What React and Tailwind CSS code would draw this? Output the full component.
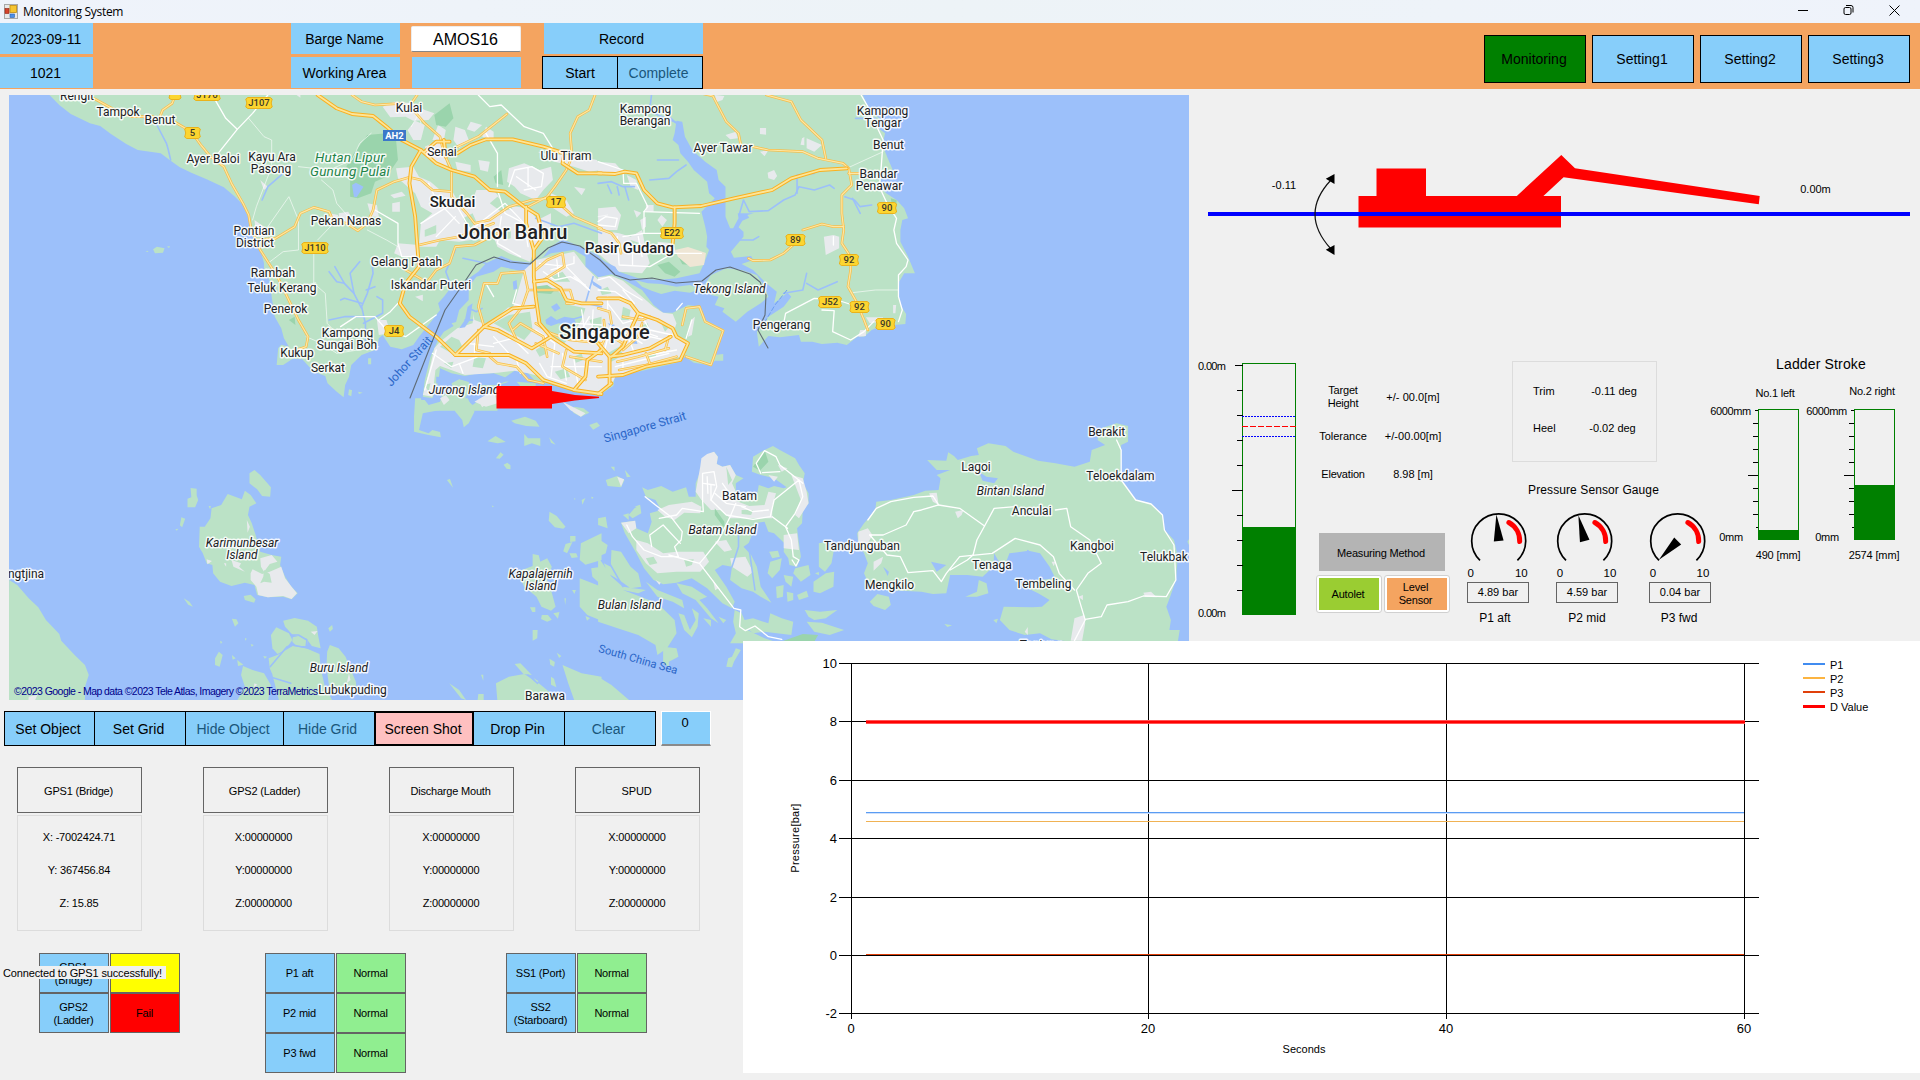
import React from "react";

/* ---------- Map data ----------
   The map is divided in four sheets; each sheet keeps its own survey grid. */

const SHEETS = {
  nw: "translate(0 90) scale(0.38265 0.33333)",
  ne: "translate(600 90) scale(0.38265 0.33333)",
  sw: "translate(0 400) scale(0.38265 0.33333)",
  se: "translate(600 400) scale(0.38265 0.33333)",
};

const LAND = {
  nw: [
    "M125 10 155 45 185 72 235 100 262 108 290 132 330 162 360 180 420 190 446 212 470 232 500 248 540 268 585 292 612 318 636 345 648 380 655 415 668 450 682 485 690 520 690 540 706 575 710 620 718 680 735 715 742 745 755 770 735 764 727 775 723 825 740 825 765 806 790 808 820 845 850 858 856 880 880 905 898 922 902 885 912 860 918 825 945 795 985 778 990 745 1000 735 1020 770 1050 778 1080 765 1095 740 1130 690 1150 660 1145 640 1160 620 1180 590 1200 585 1250 545 1270 520 1310 498 1340 512 1400 520 1420 500 1440 470 1470 448 1500 462 1572 500 1572 10Z",
    "M1145 750 1160 725 1190 705 1200 660 1225 630 1225 590 1245 560 1290 545 1310 530 1370 545 1390 520 1440 490 1500 480 1530 500 1530 530 1572 570 1572 912 1530 912 1500 905 1470 888 1440 882 1400 875 1380 850 1345 842 1320 862 1290 850 1240 852 1215 858 1180 850 1150 835 1145 880 1130 925 1105 920 1110 870 1125 800Z",
    "M1090 930 1110 930 1120 945 1150 935 1155 915 1185 905 1180 880 1200 868 1225 875 1230 900 1215 925 1235 945 1265 920 1290 900 1300 890 1300 962 1090 962Z",
    "M400 478 410 470 430 475 426 488 405 490ZM436 470l8-2-2 6zM380 485l6-3 2 4zM962 805l8 0 0 18-8 0zM912 898l8 3-2 18-8-4zM936 905l12 3-10 4z",
    "M1250 890 1280 870 1330 875 1290 890ZM1180 700 1195 695 1190 715ZM1350 875 1400 880 1400 890 1360 888Z",
  ],
  ne: [
    "M-5 10 685 10 700 50 712 70 730 85 722 110 745 130 738 165 752 205 765 240 735 262 732 290 748 310 775 330 795 355 805 385 790 390 785 420 785 455 805 500 823 550 795 550 782 575 780 620 788 650 800 672 798 702 770 705 740 705 710 720 690 740 675 738 645 765 620 758 580 762 555 755 525 755 520 735 470 742 440 738 415 770 410 725 440 680 480 650 500 620 490 608 455 640 462 605 430 575 400 540 370 522 400 510 395 498 350 503 342 485 375 440 375 425 362 412 372 392 390 383 385 375 402 370 360 370 362 385 348 415 340 415 328 380 328 290 310 270 305 240 275 215 250 190 240 178 222 140 215 95 200 92 195 130 190 150 205 165 210 190 230 215 245 240 280 275 285 310 300 325 265 365 275 410 280 440 278 470 285 480 272 520 260 550 200 565 150 570 100 565 50 545 15 520 -5 495Z",
    "M-5 562 30 553 60 568 110 600 140 645 165 668 190 668 230 645 262 650 275 690 325 720 300 795 322 792 322 812 300 812 288 826 245 818 222 800 200 818 120 840 60 855 38 862 35 888 -5 918Z",
    "M92 570 125 580 160 582 200 590 235 585 260 598 235 608 195 602 160 612 135 602 110 590Z",
    "M270 590 290 555 330 535 370 540 410 555 430 590 440 620 420 640 385 665 355 695 320 665 325 655 300 645 310 620 290 615 300 600Z",
  ],
  sw: [
    "M24 540 45 555 75 595 100 622 120 660 155 702 160 722 195 765 222 795 232 825 222 860 222 905 20 905Z",
    "M535 380 550 355 553 325 578 315 595 282 632 298 640 272 655 285 670 310 652 320 648 345 658 370 668 405 680 455 710 465 735 470 732 495 745 530 760 558 778 580 762 598 740 590 700 592 672 585 665 555 640 548 605 558 575 545 557 520 555 495 540 490 530 460 520 440 522 380Z",
    "M665 210 680 225 708 262 706 290 685 288 672 268 652 250 652 220Z",
    "M498 264l16 2 0 20 4 14-8 22-20 0 0-26 10-4z M474 352l10 4-8 26-6-6z M458 388l8-2-4 6z M545 318l6 0-2 10z",
    "M637 588 655 584 668 598 664 608 640 600ZM480 595 495 605 504 620 492 614ZM606 656 618 658 623 670 614 680ZM562 775 572 755 582 765 574 800 562 795ZM575 722l6 4-4 6z M606 765l10 10-8 4z M620 780l16 14-14 4z M640 714l5 2-4 6z M655 732l8 3-5 5z M688 768l10 2-6 6z",
    "M740 662 770 654 805 662 828 680 832 710 838 745 815 738 800 715 765 705 745 680Z",
    "M722 682 755 700 764 720 745 750 725 762 712 745 708 705Z",
    "M765 712 790 706 804 722 802 738 775 738 764 725Z",
    "M702 775 725 765 765 738 800 745 835 762 838 805 848 855 870 905 740 905 720 845 705 805Z",
    "M862 735 885 745 903 770 915 805 930 845 932 870 860 858 853 800 855 755Z M858 685l10-10 2 12-8 8z",
    "M635 798 660 810 690 820 708 855 700 905 618 905 640 860 630 825Z M712 825 732 840 755 855 800 905 730 905Z",
    "M1085 -5 1100 -5 1103 15 1155 15 1150 30 1105 40 1095 90 1120 100 1130 90 1150 96 1152 112 1120 105 1082 95 1082 50Z",
    "M1178 -5 1222 -5 1240 35 1225 70 1212 82 1208 60 1190 35Z",
    "M1336 62 1372 50 1400 62 1410 80 1375 78 1345 70ZM1274 124 1295 108 1322 126 1300 130ZM1370 102 1380 115 1412 115 1412 138 1390 130 1370 138ZM1435 112 1452 134 1440 128ZM1296 175 1308 157 1316 164 1306 176ZM1316 194l10-6 8 8 0 12-10-2z M1168 240l8-3 8 26-6-8z M1285 316l6 4-4 2z",
    "M1500 20 1525 25 1540 38 1518 50 1498 38ZM1540 75l20 -8 8 10-18 12zM1500 294l4 2-2 4z M1520 300l10-6-8 20z M1545 290l6 2-4 6z",
    "M1436 335 1455 348 1478 380 1472 386 1450 382 1434 362ZM1490 408l14 0 0 16-14 2z M1478 432l18-6-14 34-10-6z M1488 460l18 0 4 12-16 2z",
    "M1392 462 1408 466 1412 485 1430 475 1442 500 1430 540 1440 570 1452 620 1440 632 1415 620 1402 590 1370 560 1352 515 1392 498Z",
    "M1518 430 1572 400 1572 480 1530 494 1515 480ZM1545 505 1572 500 1572 555 1548 530ZM1515 535 1572 560 1572 662 1535 645 1515 620ZM1385 622l14 0 0 14-8 0z M1416 645l16 0 10 14-12 6-16-8z M1446 640l16-4-4 20z M1475 595l4 0-2 20z M1495 570l10 0-4 12z M1530 648l12 6-8 8z",
    "M1392 690 1405 690 1404 715 1392 722ZM1345 792 1360 790 1390 825 1368 822ZM1300 905 1296 850 1330 830 1370 822 1408 850 1440 880 1452 905ZM1395 835l12 8-4 6z M1470 795 1520 820 1572 830 1572 905 1502 905 1485 850ZM1436 776l14 10-2 14-10-6z M1440 830l8 6 6 26-14-8z M1174 850 1200 870 1218 900 1205 895ZM1250 882l14 0 0 20-16 0z M1257 824l6 0 0 18z M1455 758l12 10-6 6z",
  ],
  se: [
    "M110 262 125 270 160 258 190 275 225 262 232 290 250 290 250 250 262 215 268 180 280 165 298 155 308 170 305 192 320 200 340 195 355 225 375 235 355 250 355 275 330 290 362 300 410 285 415 255 440 265 455 258 480 265 488 262 455 235 420 225 397 215 400 170 430 150 452 138 470 150 510 175 520 195 535 220 530 250 545 280 545 310 530 330 528 370 515 385 520 430 525 470 515 500 495 495 492 475 480 455 482 430 455 400 440 395 430 365 405 370 400 420 375 440 395 465 410 500 420 560 448 608 420 590 400 575 370 565 340 540 345 500 320 495 300 510 330 560 352 605 345 625 320 610 280 565 240 535 200 548 165 553 140 540 115 505 95 460 80 430 65 400 55 368 90 362 95 385 125 400 135 365 130 340 160 330 145 300 120 290Z",
    "M442 455 465 452 470 470 450 475ZM445 485 475 475 470 510 450 535 438 520ZM510 505 545 495 550 525 525 545 505 520ZM480 525 505 530 500 560 485 545ZM460 560 480 555 478 590 462 595ZM488 575 505 580 505 600 490 605ZM515 585 540 572 545 590 520 600Z",
    "M572 430 590 425 612 445 605 490 588 515 572 500ZM558 545 590 520 612 515 610 560 575 580 558 575Z M562 520l10 -4 0 10z",
    "M535 630 575 635 620 630 590 655 560 660 545 650ZM540 665 580 668 638 690 600 705 560 695ZM445 640 475 655 505 665 500 705 430 695 400 700 380 680 400 655 440 670Z",
    "M352 630 370 640 378 660 400 655 385 690 430 715 470 730 340 730 355 700 348 665Z",
    "M0 420 20 435 15 460 -5 470ZM30 450 55 455 80 500 100 520 108 560 80 565 50 540 20 520 10 490 28 500ZM-5 470 30 530 60 560 120 570 100 580 60 570 150 610 195 660 200 700 175 745 150 765 145 735 100 705 60 690 -5 665Z",
    "M120 545 150 570 215 600 220 625 190 605 150 590ZM205 640 220 645 235 690 250 660 240 625 258 640 255 680 240 712 220 690ZM165 740 200 745 205 770 180 785 180 800 165 790ZM200 550 240 560 280 590 260 600 280 625 310 670 290 655 250 600 215 580Z",
    "M-5 545 15 550 45 575 10 570ZM355 745 368 750 350 785 345 802 330 800 335 775 345 770ZM270 655l20 5 0 20zM310 650l20 10-8 10z",
    "M-5 830 30 855 78 902 -5 902ZM15 240 45 228 64 240 55 262 20 258ZM65 210 80 230 70 232ZM28 200l10 0 0 14zM75 345 90 325 105 315 108 340 85 355ZM-5 355 15 350 20 385 -5 375ZM60 345l15-5 0 20zM90 320l14-6 2 8z",
    "M722 305 760 300 820 285 850 272 885 270 890 235 880 225 915 210 880 210 855 180 905 182 910 157 925 168 935 180 970 168 990 165 985 145 1015 130 1060 138 1080 155 1145 182 1190 190 1240 200 1280 185 1285 150 1320 135 1300 120 1310 85 1350 70 1380 78 1380 125 1362 135 1360 210 1365 245 1400 300 1440 310 1470 345 1475 390 1500 420 1510 470 1505 540 1490 590 1480 620 1492 660 1488 690 1515 690 1510 725 1230 725 1180 718 1150 700 1110 705 1070 690 1045 660 1055 620 1130 622 1155 620 1175 600 1145 580 1110 560 1110 545 1150 540 1190 535 1175 500 1150 460 1120 452 1070 460 1060 490 1050 500 1030 460 1028 500 1000 530 960 525 915 525 905 580 870 582 840 575 790 572 750 570 705 560 690 520 700 490 690 460 675 430 672 400 690 370 705 350 720 325Z",
    "M955 590 985 575 990 540 1010 550 1015 580 985 590ZM705 605 725 582 755 590 760 615 745 630 715 618ZM900 672l20 4-12 5zM1028 660l12-4-4 14zM1535 425l4-8 0 18z",
  ],
};

const URBAN = {
  nw: [
    "M1000 50 1030 35 1080 40 1110 60 1135 70 1120 90 1080 92 1060 80 1020 82ZM1065 120 1085 92 1110 105 1100 150 1080 150ZM1145 105 1165 120 1160 150 1130 150ZM1190 110 1215 120 1225 150 1200 175 1185 150ZM1110 170 1150 150 1170 230 1150 225 1125 210ZM1190 215 1230 225 1230 245 1195 240Z",
    "M1035 235 1080 230 1095 260 1125 275 1150 300 1180 300 1195 330 1235 330 1245 300 1290 300 1320 345 1380 355 1405 390 1440 370 1440 400 1430 440 1400 470 1385 515 1330 490 1300 470 1290 440 1200 455 1150 450 1140 470 1095 470 1100 400 1130 370 1100 350 1085 310 1040 265Z",
    "M1330 235 1370 220 1410 240 1440 230 1445 270 1420 300 1400 330 1360 310 1345 290 1325 275ZM1250 210 1280 215 1275 245 1255 240ZM1270 110 1290 125 1290 150 1260 140ZM1230 95 1260 105 1240 125 1220 118ZM1405 185 1450 195 1490 195 1560 210 1572 240 1540 245 1500 230 1450 215Z",
    "M1440 310 1480 330 1500 370 1480 380 1440 350ZM1500 290l30 6-10 20zM1025 340l20-5 0 30-20 0zM1020 315l30-10 10 12-30 8zM885 370 910 365 925 395 890 405ZM960 340 985 345 990 380 970 380ZM665 390 690 410 700 440 670 440ZM680 270 700 290 690 300ZM1040 460 1095 465 1090 500 1050 500 1030 490ZM1085 620l20-6 0 20zM985 690 1010 690 1020 730 990 735ZM860 370l24 5-6 20z M775 15l10 0 0 8z",
    "M1150 755 1195 715 1235 700 1240 650 1270 635 1340 655 1370 540 1400 510 1500 485 1530 530 1572 580 1572 905 1500 900 1440 880 1420 862 1380 850 1345 842 1300 848 1215 855 1150 828 1138 840 1130 920 1105 915 1120 850 1135 775Z",
    "M1240 935 1290 900 1300 940 1270 950ZM1150 925 1165 915 1175 930 1160 945Z",
  ],
  ne: [
    "M-5 215 40 220 60 245 20 255 -5 245ZM70 255 95 270 100 300 80 290ZM-5 355 40 350 55 375 45 420 -5 420ZM-5 420 50 430 80 440 110 420 120 480 130 520 110 550 50 545 -5 490ZM88 360l20 8-12 15zM120 345l20 0 0 20-20 0zM150 390l10-15 15 15-12 20zM150 455 190 460 200 490 160 490ZM105 390l15-10 0 30-10 10zM160 435l25 0 -5 12z",
    "M300 15 325 18 320 30 305 36ZM328 135 355 125 360 145 340 148ZM418 114l16 0 0 20-16-2zM540 145 580 165 560 185 540 175ZM528 145l6 -4 0 25-10-2zM438 248 455 240 463 258 455 270 440 265ZM418 185l22-4-10 18zM585 440 610 435 625 440 625 475 590 495ZM695 682 740 682 735 695 705 700ZM680 720 695 720 695 738 675 740ZM766 645l8 0-2 25-6 0z",
    "M-5 562 30 558 60 572 110 620 140 650 165 668 190 672 200 700 190 735 230 760 222 795 120 835 60 850 40 860 30 885 -5 900ZM238 690 248 680 240 735 230 740Z",
  ],
  sw: [
    "M655 520 660 508 685 522 705 515 735 500 745 535 762 560 776 580 762 597 740 588 700 592 675 585 670 560 655 540ZM680 475 710 465 725 485 705 492 690 515 682 500ZM605 480 630 490 625 500 640 515 610 500ZM540 478l14 5-12 10zM585 490l6 0 0 10z M645 360l8 20-6 18zM812 695l18-2-8 12zM75 890 98 884 90 905 74 905ZM1250 0 1285 0 1260 22ZM1470 5 1530 40 1518 50 1490 30ZM906 850l6-30 4 20z M665 850l8 4-10 8z",
  ],
  se: [
    "M262 200 265 175 280 162 298 155 308 170 305 192 320 200 340 195 355 225 345 250 355 275 350 300 390 318 430 315 440 275 460 280 450 320 450 355 340 355 315 330 290 330 265 300 250 275Z",
    "M150 330 180 315 240 305 265 320 262 340 220 338 195 360 170 350ZM95 420 125 430 165 460 200 455 270 455 285 485 262 515 200 515 150 520 120 490 95 450ZM55 368 92 362 95 385 75 400ZM500 225 530 235 540 275 545 310 520 355 510 345 525 300ZM480 405 515 400 520 450 480 445ZM340 475 380 470 400 515 385 530 345 500ZM300 425l30 -5 15 30-20 5zM440 225l25 5-10 15zM45 230l18 8-8 22zM465 195l25 10-15 10zM145 540l14 8-4 6zM295 540l14 25-8 6z",
    "M675 395 700 385 712 405 700 430 675 425ZM860 280 880 278 885 315 870 305ZM928 335 950 330 945 345 935 355ZM715 485 740 470 735 490 715 512ZM1420 578 1440 575 1455 592 1425 590ZM1240 655 1265 645 1268 670 1260 722 1230 722ZM1250 590l12-5 0 16zM1110 695l8-14 0 24zM1180 485l10 0-4 14z",
  ],
};

/* Green pockets that lie inside built-up areas. */
const GREENS = {
  nw: [
    "M1225 640 1230 590 1250 562 1300 545 1335 560 1340 600 1330 650 1290 690 1275 705 1240 690 1235 660Z",
    "M1402 600 1450 595 1475 620 1490 645 1530 655 1520 690 1495 735 1470 765 1440 735 1412 715Z",
    "M1290 700 1330 675 1385 665 1392 720 1370 750 1330 725Z",
    "M1150 770 1180 740 1200 750 1210 775 1180 790ZM1240 800 1270 805 1262 835 1235 830ZM1160 820 1185 815 1180 835ZM1440 560 1470 545 1490 575 1450 575ZM1400 780 1420 765 1430 790 1410 800ZM1450 845 1480 835 1490 860 1465 868ZM1540 690 1572 680 1572 715 1550 715ZM1110 885 1125 880 1120 905ZM1500 800l20-10 5 20-20 8z",
    "M1210 385 1235 370 1245 395 1225 420ZM1300 320 1340 355 1310 365 1280 340ZM1110 420 1140 405 1140 430 1110 440ZM1310 425 1335 415 1335 445 1315 450ZM1140 320 1165 330 1150 350Z",
  ],
  ne: ["M60 650 80 660 75 690 55 690ZM100 710 125 700 130 725 110 735ZM20 790 50 770 60 795 30 815ZM130 790 150 785 145 800 125 805ZM0 600 20 590 30 610 5 615ZM160 700 185 705 170 725ZM80 450l25 10-15 20zM20 470l18 5-10 18z"],
  sw: ["M690 510 705 522 710 548 690 545 680 550 688 530Z"],
  se: ["M120 475 140 470 150 490 130 495ZM220 480 245 478 240 495 225 500ZM330 200 345 240 335 255ZM370 330 400 330 395 345 370 342Z"],
};

const PARK = {
  nw: [
    "M960 135 1010 130 1035 150 1040 210 1010 260 980 275 970 310 935 325 915 320 915 270 905 230 925 190Z",
    "M1135 75 1175 40 1185 85 1165 110 1140 105Z",
    "M1290 260 1310 240 1315 285 1295 280ZM1395 590 1430 585 1450 600 1440 612 1400 608ZM755 690 770 680 772 705Z",
  ],
  ne: ["M150 525 180 515 210 545 195 560 170 550ZM205 500l25 5 5 20-20-2zM760 325l15 5 0 20-12-4z"],
  sw: [],
  se: ["M400 200 430 150 440 185 418 212ZM480 722 530 702 570 705 560 725 480 725ZM300 325 325 365 325 385 300 345Z"],
};

const WATER = {
  nw: [
    "M920 285 930 278 950 290 932 322 925 320Z",
    "M1425 690 1440 678 1455 690 1475 680 1500 685 1505 698 1480 705 1460 700 1440 708 1428 702ZM1440 650 1455 640 1465 655 1450 665ZM1340 575 1350 570 1352 595 1342 600ZM1200 715 1215 690 1222 650 1235 640 1228 690 1215 712ZM1545 570 1572 590 1572 600 1550 585Z",
    "M1140 860 1200 862 1240 875 1290 862 1330 870 1300 885 1250 885 1200 866 1160 885 1140 880Z",
  ],
  ne: ["M-5 505 40 530 55 560 20 540 -5 530Z", "M20 700 40 705 30 712ZM80 760 95 752 98 762Z"],
  sw: ["M895 870l8 0 0 8z"],
  se: ["M990 215 1010 230 1040 235 1030 250 1000 242ZM865 485 905 495 880 515ZM740 500 755 515 752 528ZM400 395 430 385 425 420 410 460 385 440Z"],
};

const RIVERS = {
  nw: [
    "M955 770 955 700 945 650 960 610 975 550 972 520", "M945 655 925 610 900 580 880 575 860 545", "M945 640 900 625 890 630", "M925 610 915 550 940 515", "M900 580 875 530", "M957 600 980 590", "M950 680 900 680 860 690", "M950 700 1000 670 1000 630 985 620", "M1180 590 1165 545 1190 480", "M446 210 440 180 435 160 410 105 370 80", "M1270 520 1210 505", "M1400 385 1460 410 1500 400 1572 430", "M1550 560 1530 640 1572 650", "M1430 700 1490 690 1520 680", "M685 330 700 290 740 250", "M1225 655 1245 665 1260 655", "M1215 690 1235 690", "M1395 440 1415 400",
  ],
  ne: [
    "M135 10 132 40 125 60 170 85 205 100", "M365 370 375 330 390 365 440 362 480 330 510 315 520 290 560 300 600 285 612 295", "M515 310 515 255 560 250", "M640 320 665 330 680 350 710 345", "M660 325 680 370", "M225 225 200 245 180 265 130 270", "M205 210 150 210", "M-5 280 30 275 60 290 90 290", "M20 285 30 310", "M45 290 50 315", "M65 290 75 330", "M365 450 400 450 415 440", "M480 610 530 600 540 550", "M540 580 570 600 620 575", "M200 100 180 80", "M668 85 720 85",
  ],
  sw: ["M706 800 750 740 765 735 830 750", "M760 705 780 705 802 720 800 740", "M705 830 760 850", "M1405 850 1380 825"],
  se: ["M362 372 362 440 345 500", "M405 570 390 450", "M190 60 130 70", "M130 545 90 500 70 440", "M15 470 60 560", "M1118 452 1128 470"],
};

const WHITE_ROADS = {
  nw: [
    "M700 15 660 70 620 118 570 190", "M560 25 590 85 620 118", "M1250 15 1280 50 1310 45 1370 110 1420 130 1450 185", "M1270 130 1300 190 1300 290", "M890 710 930 680 980 680 1010 720 1060 740 1140 675", "M990 690 1020 665 1040 640", "M980 360 1040 400 1040 460 1050 500 1090 500", "M1300 300 1320 370 1370 400", "M1190 340 1230 420 1320 340 1370 400 1380 470", "M1330 290 1345 240 1390 230 1420 250 1415 290 1370 300", "M1350 260 1400 300", "M1380 235 1380 290", "M1120 280 1140 330 1200 400", "M1100 400 1170 350", "M1140 440 1190 380", "M1350 600 1340 640 1370 650", "M1540 680 1520 720 1572 740", "M1500 560 1540 600", "M1130 790 1180 830 1250 800 1330 800", "M1240 760 1240 800", "M1400 720 1450 760 1440 860", "M1290 740 1330 790", "M1470 790 1480 870", "M1440 830 1572 830", "M1140 780 1110 900", "M1410 520 1480 530 1540 600", "M1440 540 1500 520 1500 500", "M1270 580 1290 620", "M1310 380 1300 460 1360 500",
    "M1420 545 1450 570 1490 560 1530 585", "M1455 510 1460 560", "M1520 660 1530 740", "M1550 660 1545 760", "M1505 700 1572 705", "M1500 810 1510 880", "M1410 820 1430 860 1480 880", "M1290 760 1340 745 1380 790", "M1200 820 1210 850", "M1220 760 1290 770", "M1350 810 1360 850",
  ],
  ne: [
    "M680 10 700 50 715 90 740 150 735 230 730 290 750 340 775 385 768 420 775 460 805 510 800 530 780 555 780 620 790 660 780 695", "M480 700 485 670 560 625 620 630 660 645", "M580 660 612 662 608 725 655 750 690 725 715 695", "M62 280 95 280 125 350 115 365 260 370", "M115 365 115 430 60 440", "M-5 215 60 240 62 280", "M-5 395 15 380 45 385 40 410 -5 405", "M45 440 50 525 130 530 190 490 265 490", "M85 470 85 525", "M100 440 110 500", "M110 430 160 430", "M-5 570 25 560 65 600 110 630", "M60 600 90 640", "M20 640 60 700 90 690", "M110 680 130 720 190 735", "M40 830 110 810 180 790", "M60 840 60 810 200 780", "M240 690 225 745", "M200 660 215 640", "M610 440 610 465", "M100 720 150 740", "M30 700 10 790",
    "M-5 600 40 605 70 630", "M20 660 20 620", "M70 730 90 790", "M-5 720 60 725 110 760", "M130 740 170 750",
  ],
  sw: [],
  se: [
    "M118 290 145 315 185 350 215 395 212 420 195 440 205 470 160 470 115 450 85 410 70 375", "M155 355 200 345 215 325 270 335 268 300 268 220 298 215 305 260 290 300 330 345 400 358 445 350 455 300 520 240 530 290 510 340 485 380 500 420 505 470 520 480 512 498 502 480", "M135 440 130 405 165 375 210 430", "M355 310 340 350 310 420 275 470 260 490 180 465", "M260 490 350 625 368 630 365 680 380 692 405 678 440 710 475 718", "M300 280 330 310 380 320", "M270 250 300 255", "M280 230 282 280", "M290 255 290 300", "M420 220 408 190 430 152 460 170 470 195 530 250", "M425 218 470 215", "M450 350 490 385", "M350 300 320 250", "M370 320 400 335 440 330",
    "M700 360 722 325 760 305 820 292 870 288 885 315 840 330 820 335 800 375 740 405 705 405", "M885 315 940 325 1005 378 985 420 975 465", "M1005 378 1030 325 1085 320", "M1190 330 1220 325 1230 380 1280 420 1310 490 1275 520 1245 570 1255 610 1268 660 1240 722", "M705 405 750 465 785 470 805 518 870 512 892 545 905 520 940 470 1025 460 1085 415 1150 435 1185 470 1200 520 1240 570", "M915 510 960 480 975 465", "M1350 120 1362 150 1362 240 1400 300 1440 312 1470 345 1475 390 1500 435 1505 540 1480 590 1420 588 1380 605 1325 615 1310 650 1268 658",
  ],
};

/* Narrow country lanes. */
const LANES = {
  nw: ["M650 85 690 140 710 150 710 230 690 290 670 350 660 390", "M700 410 755 320 780 390 780 480 740 485 700 520", "M820 490 820 580 850 610 855 700 880 730", "M750 590 800 585 825 578", "M800 740 840 760 880 790 990 770", "M970 130 940 160 920 210 860 240 780 230", "M840 270 870 300 880 340 910 380", "M880 390 830 450", "M960 420 1010 450 1040 470", "M1075 110 1095 70 1100 100"],
  ne: ["M645 235 740 185", "M660 608 720 600 780 600", "M-5 380 20 375"],
  sw: [],
  se: [],
};

const YELLOW_ROADS = {
  nw: [
    "M245 25 300 60 345 80 400 80", "M458 15 450 40 425 60 418 80", "M455 95 500 125 525 165 550 200 585 230 605 280 635 340 650 375 655 410 680 480 725 560 780 690 805 740 800 770 775 780", "M670 450 720 445 770 410 785 370 820 352 860 365 870 390 905 400 935 422 960 400 975 360 985 300 1030 275 1070 262 1100 270 1130 300 1180 305", "M920 15 945 35 980 45 1050 40 1080 60 1110 100 1150 140 1160 190 1180 240 1180 320 1220 370 1240 400", "M1090 15 1075 40", "M1195 170 1250 140 1325 72", "M1555 15 1540 60 1510 80 1490 130 1495 200 1480 240 1450 290 1430 320 1380 350", "M1430 325 1390 330 1330 350 1280 390 1240 400", "M1460 340 1500 380 1572 415", "M1095 465 1150 450 1200 440 1290 400", "M1120 570 1140 540 1175 520 1190 470 1240 465 1300 430", "M1060 540 1120 580", "M1265 710 1250 650 1265 580 1300 580 1310 550 1370 545 1380 600 1365 650 1330 700 1350 750", "M1380 600 1430 600 1490 600 1500 640 1480 640", "M1400 540 1430 510 1470 490 1475 530 1420 570", "M1250 720 1245 780 1280 790", "M1280 800 1300 820 1350 830 1380 870 1420 880", "M1400 700 1440 730 1490 750 1572 760", "M1340 720 1360 700 1420 740 1430 800", "M1480 780 1470 830 1530 870", "M1490 800 1572 815", "M1400 760 1460 790",
  ],
  ne: [
    "M265 10 295 18 330 95 362 130 368 165", "M435 15 500 35 525 90 580 150 590 205", "M400 170 440 180 530 185 570 205 635 220 650 235 658 285 632 315 632 370 637 420 632 460 655 500 655 540 648 590 670 635 690 690 700 720", "M650 250 680 250", "M530 420 580 402 610 410 637 410", "M388 505 400 512 445 510 480 490 510 460", "M-5 415 30 430 50 460 55 490", "M-5 655 25 665 30 700", "M60 680 110 690", "M110 690 130 680", "M215 705 225 655 260 650 275 695 322 722 290 825 225 800", "M45 815 100 800 180 775", "M50 840 120 825 200 800", "M180 740 170 780", "M30 740 60 760 40 800", "M10 690 15 740 -5 790", "M110 700 100 740 60 780", "M120 790 130 820",
  ],
  sw: [],
  se: [],
};

const HIGHWAYS = {
  nw: [
    "M830 15 880 55 920 72 975 78 1010 110 1050 150 1100 180 1140 220 1180 240 1240 260 1280 300 1320 305 1370 350 1405 375 1420 440 1395 480 1395 560 1400 620 1410 700 1440 740 1500 785 1572 790",
    "M1100 180 1075 230 1070 280 1085 380 1090 460 1095 530 1060 580 1045 640 1070 680 1140 740 1190 795 1330 795 1375 820 1420 870 1500 900 1572 912",
    "M1110 185 1140 155 1175 155", "M1160 150 1165 200", "M1195 190 1230 165 1270 148 1340 148 1420 170 1475 190 1470 220 1510 250 1572 250",
    "M1395 575 1430 570 1465 595 1480 630 1520 640 1572 640", "M1190 795 1265 710 1300 720 1390 775 1440 740", "M1265 710 1340 655 1395 650", "M1375 350 1375 400 1395 480", "M1500 900 1530 860 1535 810 1572 780",
  ],
  ne: [
    "M-5 250 40 252 65 245 95 250 115 300 150 340 190 352 265 348 350 325 450 300 500 265 575 240 645 235", "M195 352 195 400 190 460",
    "M-5 625 50 625 80 640 100 670 150 690 190 715 200 740 230 760 210 810 120 830 60 855 -5 860", "M25 885 25 800 60 795 130 775 185 740", "M-5 760 25 800", "M100 670 80 720 60 770 30 800", "M-5 912 30 880",
  ],
  sw: [],
  se: [],
};

const TOWNS = [
  ["Rengit", 77, 96], ["Tampok", 118, 112], ["Benut", 160, 120], ["Ayer Baloi", 213, 159],
  ["Kayu Ara", 272, 157], ["Pasong", 271, 169], ["Kulai", 409, 108], ["Senai", 442, 152],
  ["Ulu Tiram", 566, 156], ["Pekan Nanas", 346, 221], ["Pontian", 254, 231], ["District", 255, 243],
  ["Gelang Patah", 406.5, 262], ["Rambah", 273, 273], ["Iskandar Puteri", 431, 285],
  ["Teluk Kerang", 282, 288], ["Penerok", 285.5, 309], ["Kampong", 347.5, 333], ["Sungai Boh", 347, 345],
  ["Kukup", 297, 353], ["Serkat", 328, 368], ["Kampong", 645.5, 109], ["Berangan", 645, 121],
  ["Ayer Tawar", 723, 148], ["Kampong", 882.5, 111], ["Tengar", 883, 123], ["Benut", 888.5, 145],
  ["Bandar", 878.6, 174], ["Penawar", 879, 186], ["Pengerang", 781.5, 325], ["ngtjina", 26, 574],
  ["Lubukpuding", 352.5, 690], ["Barawa", 545, 696], ["Batam", 739.5, 496], ["Lagoi", 976, 467],
  ["Anculai", 1031.7, 511], ["Berakit", 1106.7, 432], ["Teloekdalam", 1120.5, 476],
  ["Kangboi", 1092, 546], ["Telukbak", 1164, 557], ["Tandjunguban", 862, 546], ["Tenaga", 992, 565],
  ["Mengkilo", 889.5, 585], ["Tembeling", 1043.5, 584], ["Tanjung", 1041, 645],
];

const ISLANDS = [
  ["Jurong Island", 464, 390], ["Tekong Island", 729.5, 289], ["Karimunbesar", 242, 543], ["Island", 242, 555],
  ["Kapalajernih", 540.5, 574], ["Island", 541, 586], ["Buru Island", 339, 668], ["Batam Island", 722.5, 530],
  ["Bulan Island", 629.5, 605], ["Bintan Island", 1010.5, 491],
];

const SHIELDS = [
  ["J107", 259, 103], ["J176", 207, 95], ["", 175, 94], ["5", 192.5, 133], ["17", 556, 202], ["J110", 315, 248],
  ["J4", 394, 331], ["E22", 672, 233], ["89", 795.5, 240], ["92", 849, 260], ["92", 859.5, 307],
  ["90", 887, 208], ["90", 885.5, 324], ["J52", 830, 302],
];

function Paths({ data, ...rest }) {
  return Object.keys(SHEETS).map((k) => (
    <g key={k} transform={SHEETS[k]} {...rest}>
      {data[k].map((d, i) => (
        <path key={i} d={d} vectorEffect="non-scaling-stroke" />
      ))}
    </g>
  ));
}

const line = { fill: "none", strokeLinecap: "round", strokeLinejoin: "round" };
const halo = { stroke: "#ffffff", strokeWidth: 3, strokeOpacity: 0.85, strokeLinejoin: "round", paintOrder: "stroke" };

function MapView() {
  return (
    <svg className="block h-[605px] w-[1180px]" viewBox="9 95 1180 605" fontFamily="Roboto, sans-serif" textAnchor="middle">
      <rect x="9" y="95" width="1180" height="605" fill="#9cc0fa" />
      <Paths data={LAND} fill="#bbe2c6" />
      <Paths data={URBAN} fill="#e8eaed" />
      <Paths data={GREENS} fill="#bbe2c6" />
      <Paths data={PARK} fill="#9ad4ac" />
      <path d="M675 250 688 247 706 253 704 265 690 267 678 257Z" fill="#efe6d5" />
      <Paths data={WATER} fill="#9cc0fa" />
      <Paths data={RIVERS} stroke="#9cc0fa" strokeWidth="1.6" {...line} />
      <Paths data={LANES} stroke="#ffffff" strokeOpacity="0.6" strokeWidth="1" {...line} />
      <Paths data={WHITE_ROADS} stroke="#ffffff" strokeWidth="1.3" {...line} />
      <Paths data={YELLOW_ROADS} stroke="#f7bd48" strokeWidth="2.6" {...line} />
      <Paths data={YELLOW_ROADS} stroke="#fde7a5" strokeWidth="1.2" {...line} />
      <Paths data={HIGHWAYS} stroke="#f9b021" strokeWidth="3.8" {...line} />
      <Paths data={HIGHWAYS} stroke="#fde597" strokeWidth="1.8" {...line} />
      <path
        d="M410 398 432 342 445 310 459 290 476 265 494 257 510 262 530 264 548 248 562 242 580 246 600 260 615 275 630 280 652 278 676 283 702 281 716 270 730 267 750 274 760 282 766 295 765 315 758 330 768 348"
        stroke="#5f6b76" strokeWidth="1.1" {...line}
      />
      <path d="M787 290 775 305 760 330" stroke="#6d9ff2" strokeWidth="1" strokeDasharray="5 2" fill="none" />

      {SHIELDS.map(([t, x, y], i) => {
        const w = 12 + t.length * 3.6;
        return (
          <g key={i}>
            <path
              d={`M${x - w / 2} ${y - 4}L${x - w / 2 + 2} ${y - 5.5}H${x + w / 2 - 2}L${x + w / 2} ${y - 4}L${x + w / 2 - 1} ${y}L${x + w / 2} ${y + 4}L${x + w / 2 - 2} ${y + 5.5}H${x - w / 2 + 2}L${x - w / 2} ${y + 4}L${x - w / 2 + 1} ${y}Z`}
              fill="#fcd530" stroke="#e9b21c" strokeWidth="1"
            />
            <text x={x} y={y + 3.4} fontSize="9.5" fontWeight="500" fill="#3c3a2a">{t}</text>
          </g>
        );
      })}
      <rect x="383" y="130" width="23" height="11" fill="#3b78c9" />
      <text x="394.500" y="139.200" fontSize="9.5" fontWeight="700" fill="#ffffff">AH2</text>

      <g fontSize="12" fill="#202124" {...halo}>
        {TOWNS.map(([t, x, y], i) => <text key={i} x={x} y={y + 4.3}>{t}</text>)}
      </g>
      <g fontSize="12" fontStyle="italic" fill="#202124" {...halo}>
        {ISLANDS.map(([t, x, y], i) => <text key={i} x={x} y={y + 4.3}>{t}</text>)}
      </g>
      <g fontSize="13.5" fontStyle="italic" fill="#1e8449" {...halo} letterSpacing="0.200">
        <text x="350" y="161.500">Hutan Lipur</text>
        <text x="350" y="175.500">Gunung Pulai</text>
      </g>
      <g fontWeight="500" fill="#202124" {...halo}>
        <text x="452.500" y="207" fontSize="15">Skudai</text>
        <text x="629.500" y="253" fontSize="14.800">Pasir Gudang</text>
        <text x="512.500" y="239" fontSize="20">Johor Bahru</text>
        <text x="604.500" y="339" fontSize="20">Singapore</text>
      </g>
      <g fontSize="12" fill="#2a66c8">
        <text transform="translate(412 364) rotate(-48)">Johor Strait</text>
        <text transform="translate(646 431) rotate(-16)">Singapore Strait</text>
        <text transform="translate(637 663) rotate(16)" fontSize="11.200">South China Sea</text>
      </g>
      <path d="M496.500 386H552V391L575 395 599 396.800V398L575 400.500 552 404V408.500H496.500Z" fill="#ff0000" />
      <text x="14" y="694.500" textAnchor="start" textLength="304" fontFamily="'Liberation Sans', Arial, sans-serif" fontSize="10.500" fill="#00008b">
        ©2023 Google - Map data ©2023 Tele Atlas, Imagery ©2023 TerraMetrics
      </text>
    </svg>
  );
}

/* ---------- Title bar and toolbar ---------- */

function TitleBar() {
  return (
    <div className="flex h-[23px] items-center bg-gradient-to-r from-[#eff3fb] via-[#edf3f7] to-[#eff3fb] pl-1">
      <svg className="h-[15px] w-[14px]" viewBox="0 0 14 15">
        <rect x=".5" y=".5" width="13" height="14" fill="#e8e8e8" stroke="#a8a8a8" />
        <rect x="6" y="1.500" width="6.500" height="7" fill="#f6c531" stroke="#c08c10" strokeWidth=".8" />
        <rect x="1" y="4.500" width="4" height="5" fill="#d5432c" stroke="#8f2314" strokeWidth=".6" />
        <rect x="6" y="10" width="4.500" height="3.500" fill="#4e8fe8" stroke="#2b62ae" strokeWidth=".6" />
      </svg>
      <span className="ml-[5px] pt-px text-[12px] tracking-[-0.3px]" style={{ fontFamily: "'Open Sans', 'Noto Sans', sans-serif" }}>
        Monitoring System
      </span>
      <svg className="ml-auto mr-[19px] h-[23px] w-[103px]" viewBox="0 0 103 23" fill="none" stroke="#000000">
        <path d="M0 10.500h10" />
        <rect x="46" y="7.500" width="7" height="7" rx="1.500" />
        <path d="M48 5.500h5a2 2 0 0 1 2 2v5" />
        <path d="M91.500 5.500l10 10M101.500 5.500l-10 10" />
      </svg>
    </div>
  );
}

const box = "flex items-center justify-center bg-[#87cefa] pt-[2px] pr-[2px]";

function Toolbar() {
  return (
    <div className="flex h-[66px] bg-[#f4a460] text-[14px]">
      <div className="flex w-[93px] flex-col gap-[3px]">
        <div className={box + " h-[31px] pl-px"}>2023-09-11</div>
        <div className={box + " h-[31px]"}>1021</div>
      </div>
      <div className="ml-[198px] flex w-[109px] flex-col gap-[3px]">
        <div className={box + " h-[31px]"}>Barge Name</div>
        <div className={box + " h-[31px]"}>Working Area</div>
      </div>
      <div className="ml-[11px] flex w-[110px] flex-col gap-[5px] pt-[3px]">
        <div className="flex h-[26px] items-center justify-center rounded-[2px] border border-b-[#868686] border-[#ececec] bg-white pt-px pr-px text-[16px]">AMOS16</div>
        <div className={box + " ml-px h-[31px]"} />
      </div>
      <div className="ml-[21px] flex w-[161px] flex-col gap-[2px]">
        <div className={box + " ml-[2px] h-[31px] pr-[4px]"}>Record</div>
        <div className="flex h-[33px] border border-black bg-[#87cefa] pt-px">
          <div className="-mt-px flex w-[75px] items-center justify-center border-r border-black pt-[2px]">Start</div>
          <div className="flex flex-1 items-center justify-center pr-[3px] pt-px text-[#1a567a]">Complete</div>
        </div>
      </div>
      <div className="ml-auto mr-[10px] flex gap-[6px] pt-[12px]">
        {["Monitoring", "Setting1", "Setting2", "Setting3"].map((t, i) => (
          <div key={t} className={"flex h-[48px] w-[102px] items-center justify-center border border-black pt-px pr-[2px] " + (i === 0 ? "bg-[#008000]" : "bg-[#87cefa]")}>
            {t}
          </div>
        ))}
      </div>
    </div>
  );
}

/* ---------- Right-hand instruments ---------- */

function BargeProfile() {
  return (
    <svg className="block h-[255px] w-[731px]" viewBox="1189 89 731 255" fontSize="11" textAnchor="middle">
      <path d="M1376.500 168.500H1426V196H1561V227.500H1358.500V196H1376.500Z" fill="#ff0000" />
      <path d="M1516.800 196 1561.300 155 1575 168.300 1759.700 196 1758.800 204.300 1563.600 177.300 1543.400 196Z" fill="#ff0000" />
      <rect x="1208" y="212" width="702" height="4" fill="#0000ff" />
      <path d="M1331 180Q1299 214 1331 249" fill="none" stroke="#111111" strokeWidth="1.200" />
      <path d="M1334.500 174 1325.800 178.700 1334.500 184ZM1334.500 255 1325.800 249.700 1334.500 245Z" fill="#000000" />
      <text x="1284" y="189">-0.11</text>
      <text x="1815.500" y="192.500">0.00m</text>
    </svg>
  );
}

function Tank() {
  return (
    <svg className="block h-[297px] w-[117px]" viewBox="1189 344 117 297" fontSize="11" shapeRendering="crispEdges">
      <rect x="1242.500" y="363.500" width="53" height="251" fill="none" stroke="#008000" />
      <rect x="1242" y="527" width="54" height="88" fill="#008000" />
      {Array.from({ length: 10 }, (_, i) => (
        <path key={i} d={`M${i === 5 ? 1232 : i === 0 ? 1235 : 1237} ${365.5 + 25 * i}H1243`} stroke="#000000" />
      ))}
      <path d="M1242 416.500h54M1242 436.500h54" stroke="#0000ff" strokeDasharray="2 1" />
      <path d="M1242 426.500h54" stroke="#ff0000" strokeDasharray="6 2" />
      <text x="1198" y="370" textLength="28">0.00m</text>
      <text x="1198" y="617" textLength="28">0.00m</text>
    </svg>
  );
}

function Measuring() {
  return (
    <div className="flex w-[150px] flex-col pl-[10px] pt-[40px] text-[11px] leading-[13px] tracking-[-0.2px]">
      <div className="grid grid-cols-[54px_86px] items-center text-center">
        <span className="h-[26px]">Target<br />Height</span>
        <span className="tracking-[0.05px]">+/- 00.0[m]</span>
        <span className="mt-[20px] tracking-normal">Tolerance</span>
        <span className="mt-[20px] tracking-[0.05px]">+/-00.00[m]</span>
        <span className="mt-[25px]">Elevation</span>
        <span className="mt-[25px] tracking-normal">8.98 [m]</span>
      </div>
      <div className="ml-[3px] mt-[52px] flex h-[38px] w-[126px] items-center justify-center bg-[#b4b4b4] pr-[2px] pt-[2px]">Measuring Method</div>
      <div className="mt-[4px] flex gap-[2px]">
        <div className="flex h-[38px] w-[66px] items-center justify-center rounded-[3px] border border-[#d0d0d0] bg-white p-[2px]">
          <div className="flex h-full w-full items-center justify-center bg-[#9acd32] pr-[2px]">Autolet</div>
        </div>
        <div className="flex h-[38px] w-[66px] items-center justify-center rounded-[3px] border border-[#d0d0d0] bg-white p-[2px]">
          <div className="flex h-full w-full items-center justify-center bg-[#f4a460] pr-[3px] text-center">Level<br />Sensor</div>
        </div>
      </div>
    </div>
  );
}

const GAUGES = [
  { name: "P1 aft", value: "4.89 bar", angle: -5, dx: 0.7, low: -28, high: 22.6, space: "ml-0", shift: "-translate-x-[3px]" },
  { name: "P2 mid", value: "4.59 bar", angle: -13.8, dx: -2.3, low: -24.7, high: 25.3, space: "ml-[27px]", shift: "" },
  { name: "P3 fwd", value: "0.04 bar", angle: -135, dx: -2.3, low: -24.7, high: 25.3, space: "ml-[31px]", shift: "-translate-x-[1px]" },
];

function Gauge({ g }) {
  return (
    <div className={"flex w-[62px] flex-col items-center " + g.space}>
      <svg className="block h-[70px] w-[62px] overflow-visible" viewBox={`${-31 - g.dx} -29 62 70`} fontSize="11.500" textAnchor="middle">
        <path d="M-18.700 19.300A27 27 0 1 1 18.700 19.300" fill="none" stroke="#000000" strokeWidth="1.700" />
        <path d="M10.200 -18.500A21 21 0 0 1 21 .5" fill="none" stroke="#ff0000" strokeWidth="5" strokeLinecap="round" />
        <path d="M0 -26.500 4.900 0H-4.900Z" transform={`rotate(${g.angle})`} fill="#000000" />
        <text x={g.low} y="35.500">0</text>
        <text x={g.high} y="35.500">10</text>
      </svg>
      <div className="flex h-[21px] w-[62px] items-center justify-center border border-[#646464] text-[11px]">{g.value}</div>
      <div className={"mt-[8px] whitespace-nowrap text-[12px] leading-[14px] " + g.shift}>{g.name}</div>
    </div>
  );
}

function Sensors() {
  return (
    <div className="flex w-[264px] flex-col pt-[17px]">
      <div className="ml-[56px] grid h-[101px] w-[145px] grid-cols-[58px_87px] content-start border border-[#dcdcdc] pt-[22px] text-[11px] leading-[14px]">
        <span className="pl-[20px]">Trim</span>
        <span className="pr-px text-center">-0.11 deg</span>
        <span className="mt-[23px] pl-[20px]">Heel</span>
        <span className="mt-[23px] pr-[4px] text-center">-0.02 deg</span>
      </div>
      <div className="mt-[20px] pl-[11px] text-center text-[12px] leading-[16px] tracking-[0.1px]">Pressure Sensor Gauge</div>
      <div className="ml-[11px] mt-[14px] flex">
        {GAUGES.map((g) => <Gauge key={g.name} g={g} />)}
      </div>
    </div>
  );
}

function StrokeBar({ x, fillTop, label, labelY, value }) {
  return (
    <g>
      <text x={x + 20 - (x < 1800 ? 3 : 2)} y={labelY} letterSpacing="-0.200">{label}</text>
      <g shapeRendering="crispEdges">
        <rect x={x + 0.5} y="409.500" width="40" height="130" fill="none" stroke="#008000" />
        <rect x={x} y={fillTop} width="41" height={540 - fillTop} fill="#008000" />
        {Array.from({ length: 10 }, (_, i) => (
          <path key={i} d={`M${x - (i === 5 ? 10 : i === 0 ? 3 : i === 9 ? 2 : 5)} ${410.5 + 13 * i}h${i === 5 ? 10 : i === 0 ? 3 : i === 9 ? 2 : 5}`} stroke="#000000" />
        ))}
      </g>
      <text x={x - 27.5} y="415" letterSpacing="-0.400">6000mm</text>
      <text x={x - 27} y="541" letterSpacing="-0.300">0mm</text>
      <text x={x + 20} y="559" letterSpacing="-0.150">{value}</text>
    </g>
  );
}

function LadderStroke() {
  return (
    <svg className="block h-[297px] w-[200px] overflow-visible" viewBox="1720 344 200 297" fontSize="11" textAnchor="middle">
      <text x="1821" y="369" fontSize="14" letterSpacing="0.150">Ladder Stroke</text>
      <StrokeBar x={1758} fillTop={530} label="No.1 left" labelY={397} value="490 [mm]" />
      <StrokeBar x={1854} fillTop={485} label="No.2 right" labelY={395} value="2574 [mm]" />
    </svg>
  );
}

/* ---------- Bottom-left controls ---------- */

const ACTIONS = [
  ["Set Object", "w-[91px] text-black"], ["Set Grid", "w-[92px] text-black"], ["Hide Object", "w-[99px] text-[#1a567a]"],
  ["Hide Grid", "w-[92px] text-[#1a567a]"], ["Screen Shot", ""], ["Drop Pin", "w-[92px] text-black"], ["Clear", "w-[92px] text-[#1a567a]"],
];

const POSITIONS = [
  ["GPS1 (Bridge)", "X: -7002424.71", "Y: 367456.84", "Z: 15.85"],
  ["GPS2 (Ladder)", "X:00000000", "Y:00000000", "Z:00000000"],
  ["Discharge Mouth", "X:00000000", "Y:00000000", "Z:00000000"],
  ["SPUD", "X:00000000", "Y:00000000", "Z:00000000"],
];

const cell = "flex h-[40px] w-[70px] items-center justify-center border border-[#646464] pt-px pr-px text-center leading-[13px] ";

function StatusGroup({ rows, className }) {
  return (
    <div className={"grid grid-cols-[70px_70px] content-start gap-x-px " + className}>
      {rows.map(([name, state, tone]) => (
        <React.Fragment key={name}>
          <div className={cell + "whitespace-pre-line bg-[#87cefa]"}>{name}</div>
          <div className={cell + tone}>{state}</div>
        </React.Fragment>
      ))}
    </div>
  );
}

function Controls() {
  return (
    <div className="flex h-[380px] flex-col pt-[11px] text-[11px] tracking-[-0.2px]">
      <div className="flex pl-[4px] text-[14px] tracking-normal">
        {ACTIONS.map(([t, c]) =>
          t === "Screen Shot" ? (
            <div key={t} className="z-10 -ml-px flex h-[35px] w-[100px] items-center justify-center whitespace-nowrap border-2 border-black bg-[#ffc0c0] pr-[2px] pt-[2px]">{t}</div>
          ) : (
            <div key={t} className={"-ml-px flex h-[35px] items-center justify-center border border-black bg-[#87cefa] pr-[3px] pt-[2px] first:ml-0 " + c}>{t}</div>
          )
        )}
        <div className="ml-[5px] h-[35px] w-[50px] border border-white border-b-2 border-b-[#8a8a8a] bg-[#87cefa] pr-[2px] pt-[2px] text-center text-[13px] leading-[17px]">0</div>
      </div>

      <div className="mt-[21px] flex gap-[61px] pl-[17px]">
        {POSITIONS.map(([name, ...axes], i) => (
          <div key={name} className="flex w-[125px] flex-col gap-[2px]">
            <div className="flex h-[46px] items-center justify-center border border-[#646464] pr-[2px] pt-[2px]">{name}</div>
            <div className={"flex h-[116px] flex-col items-center gap-[19px] border border-[#dcdcdc] pt-[14px] leading-[14px] " + (i === 1 ? "pr-[4px]" : "pr-[1px]")}>
              {axes.map((a) => <span key={a}>{a}</span>)}
            </div>
          </div>
        ))}
      </div>

      <div className="relative mt-[22px] flex">
        <StatusGroup
          className="ml-[39px]"
          rows={[["GPS1\n(Bridge)", "", "bg-[#ffff00]"], ["GPS2\n(Ladder)", "Fail", "bg-[#ff0000]"]]}
        />
        <StatusGroup
          className="ml-[85px]"
          rows={[["P1 aft", "Normal", "bg-[#90ee90]"], ["P2 mid", "Normal", "bg-[#90ee90]"], ["P3 fwd", "Normal", "bg-[#90ee90]"]]}
        />
        <StatusGroup
          className="ml-[100px]"
          rows={[["SS1 (Port)", "Normal", "bg-[#90ee90]"], ["SS2\n(Starboard)", "Normal", "bg-[#90ee90]"]]}
        />
        <div className="absolute left-0 top-[13px] h-[13px] w-[166px] whitespace-nowrap bg-[#f0f0f0] pl-[3px] leading-[15px] tracking-[-0.14px]">
          Connected to GPS1 successfully!
        </div>
      </div>
    </div>
  );
}

/* ---------- Pressure chart ---------- */

const Y_AXIS = [[10, 663.5], [8, 721.5], [6, 780.5], [4, 838.5], [2, 897.5], [0, 955.5], [-2, 1013.5]];
const X_AXIS = [[0, 851.5], [20, 1148.5], [40, 1446.5], [60, 1744.5]];
const LEGEND = [["P1", "#418cf0", 664, 2], ["P2", "#fcb441", 678, 2], ["P3", "#e0400a", 692, 2], ["D Value", "#ff0000", 706.5, 3]];

function PressureChart() {
  return (
    <svg className="block h-[432px] w-[1177px] bg-white" viewBox="743 641 1177 432" fontSize="13">
      <g shapeRendering="crispEdges" stroke="#000000">
        {Y_AXIS.map(([v, y]) => <path key={v} d={`M839 ${y}H1759`} />)}
        {X_AXIS.map(([v, x]) => <path key={v} d={`M${x} 663V1019`} />)}
      </g>
      <path d="M866 722H1745" stroke="#ff7070" strokeWidth="4" />
      <path d="M866 722H1745" stroke="#ff0000" strokeWidth="2.400" />
      <g shapeRendering="crispEdges">
        <path d="M866 813.500H1744" stroke="#cfe0fa" />
        <path d="M866 812.500H1744" stroke="#5a9cf3" />
        <path d="M866 821.500H1744" stroke="#f0b253" />
        <path d="M866 954.500H1744" stroke="#e0400a" />
        {LEGEND.map(([t, c, y, w]) => <rect key={t} x="1803" y={Math.round(y - w / 2)} width="22" height={w} fill={c} />)}
      </g>
      {Y_AXIS.map(([v, y]) => <text key={v} x="837" y={y + 4.5} textAnchor="end">{v}</text>)}
      {X_AXIS.map(([v, x]) => <text key={v} x={x - 0.5} y="1033" textAnchor="middle">{v}</text>)}
      {LEGEND.map(([t, , y]) => <text key={t} x="1830" y={y + 4.5} fontSize="11">{t}</text>)}
      <text x="1304" y="1053" fontSize="11" textAnchor="middle">Seconds</text>
      <text transform="translate(798.500 838) rotate(-90)" fontSize="11" letterSpacing="0.250" textAnchor="middle">Pressure[bar]</text>
    </svg>
  );
}

export default function App() {
  return (
    <div
      className="flex h-[1080px] w-[1920px] flex-col overflow-hidden bg-[#f0f0f0] text-black"
      style={{ fontFamily: "'Liberation Sans', Arial, sans-serif" }}
    >
      <TitleBar />
      <Toolbar />
      <div className="grid flex-1 grid-cols-[743px_446px_731px] grid-rows-[552px_59px_380px]">
        <div className="col-start-1 col-end-3 row-start-1 row-end-3 pl-[9px] pt-[6px]">
          <MapView />
        </div>
        <div className="col-start-3 row-start-1 flex flex-col">
          <BargeProfile />
          <div className="flex">
            <Tank />
            <Measuring />
            <Sensors />
            <LadderStroke />
          </div>
        </div>
        <div className="z-10 col-start-2 col-end-4 row-start-2 row-end-4">
          <PressureChart />
        </div>
        <div className="col-start-1 row-start-3">
          <Controls />
        </div>
      </div>
    </div>
  );
}
